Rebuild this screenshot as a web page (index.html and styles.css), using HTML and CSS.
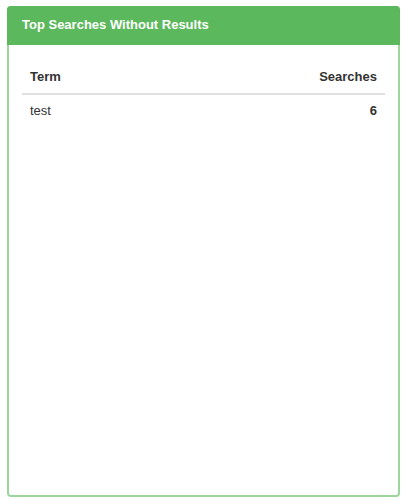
FILE: index.html
```html
<!DOCTYPE html>
<html>
<head>
    <title>Top Searches Without Results</title>
    <link rel="stylesheet" href="styles.css">
</head>
<body>
    <div class="panel panel-success">
        <div class="panel-heading">
            <h3 class="panel-title">Top Searches Without Results</h3>
        </div>
        <div class="panel-body">
            <table class="table">
                <thead>
                    <tr>
                        <th>Term</th>
                        <th class="num">Searches</th>
                    </tr>
                </thead>
                <tbody>
                    <tr>
                        <td>test</td>
                        <td class="num"><strong>6</strong></td>
                    </tr>
                </tbody>
            </table>
        </div>
    </div>
</body>
</html>
```

FILE: styles.css
```css
body {
    font-family: 'Liberation Sans', Arial, sans-serif;
    font-size: 13px;
    line-height: 1.42857;
    color: #333;
    background-color: #fff;
    margin: 0;
    padding: 6px 4px 3px 7px;
}

.panel {
    height: 491px;
    box-sizing: border-box;
    border: 2px solid #9cd69c;
    border-radius: 4px;
    background-color: #fff;
}

.panel-heading {
    background-color: #5cb85c;
    color: #fff;
    padding: 10px 15px 11px 15px;
    margin: -2px -2px 0 -2px;
    border-radius: 4px 4px 0 0;
}

.panel-title {
    margin: 0;
    font-size: 13px;
    font-weight: bold;
    line-height: 18px;
}

.panel-body {
    padding: 15px 13px;
}

.table {
    width: 100%;
    border-collapse: collapse;
}

.table th,
.table td {
    padding: 8px;
    text-align: left;
    line-height: 18px;
}

.table th {
    padding-bottom: 7px;
    border-bottom: 2px solid #e0e0e0;
}

.table td {
    padding-top: 7px;
}

.table .num {
    text-align: right;
}
```
